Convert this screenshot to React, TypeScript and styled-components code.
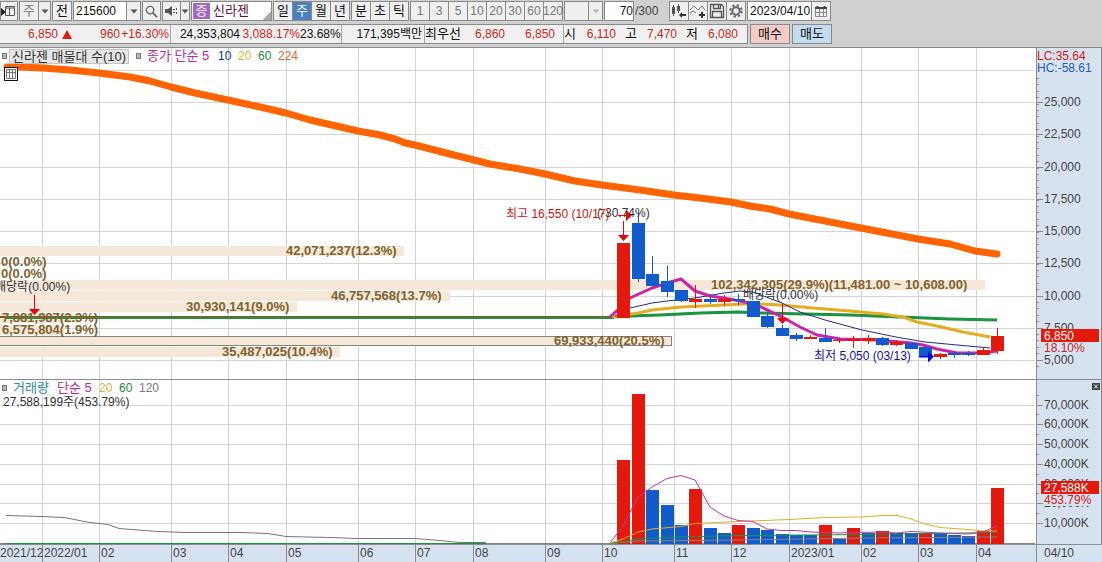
import React from 'react';
import styled, { createGlobalStyle } from 'styled-components';

const FONT = '"Liberation Sans", "Noto Sans CJK KR", sans-serif';
const RED = '#e5190b';
const BLUE = '#125bcc';
const MAGENTA = '#cc22a8';
const YELLOW = '#e6ac20';
const GREEN = '#1a9440';
const NAVY = '#1d2f8c';
const GRID = '#d4d4d4';
const AXIS_BG = '#d7e2f0';
const AXIS_LINE = '#8c8c90';
const PROFILE = '#f5e8d8';
const PROFILE_TEXT = '#80622f';

const GlobalStyle = createGlobalStyle`
  * { box-sizing: border-box; }
  body { margin: 0; background: #d0d0d0; font-family: ${FONT}; font-size: 12px; color: #111; overflow-x: hidden; }
  button, input, select { font: inherit; color: inherit; margin: 0; border-radius: 0; }
`;

const Header = styled.header`
  display: flex;
  flex-direction: column;
  gap: 3px;
  padding: 1px 0 3px;
  background: #d0d0d0;
`;

const Bar = styled.div<{ $gap?: number }>`
  display: flex;
  gap: ${p => p.$gap ?? 1}px;
  height: 20px;
`;

const Group = styled.div`
  display: flex;
  flex: none;
  border: 1px solid #8a8a8a;
  background: #8a8a8a;
  gap: 1px;
`;

const Key = styled.button<{ $w?: number; $active?: boolean; $muted?: boolean }>`
  display: flex;
  align-items: center;
  justify-content: center;
  width: ${p => p.$w ?? 18}px;
  height: 18px;
  padding: 0;
  border: 0;
  font-size: ${p => (p.$muted ? 12 : 13)}px;
  line-height: 18px;
  white-space: nowrap;
  background: ${p => (p.$active ? '#4a80c0' : '#efefef')};
  color: ${p => (p.$active ? '#fff' : p.$muted ? '#777' : '#111')};
`;

const Field = styled.input<{ $w: number; $align?: string }>`
  width: ${p => p.$w}px;
  height: 18px;
  padding: 0 0 0 2px;
  border: 0;
  background: #fff;
  text-align: ${p => p.$align ?? 'left'};
  outline: none;
`;

const Pick = styled.select<{ $w: number }>`
  width: ${p => p.$w}px;
  height: 18px;
  padding: 0 3px;
  border: 0;
  appearance: none;
  background: #efefef;
  color: #777;
  font-size: 13px;
  line-height: 18px;
`;

const Badge = styled.span`
  width: 17px;
  height: 16px;
  margin: 1px 3px 1px 1px;
  line-height: 16px;
  text-align: center;
  background: #a964c4;
  color: #fff;
`;

const StockName = styled.div`
  display: flex;
  width: 79px;
  height: 18px;
  background: linear-gradient(135deg, #fff 50%, #aaa 50%) right bottom / 8px 8px no-repeat #fff;
  color: #6a1040;
  font-size: 13px;
  line-height: 18px;
`;

const Total = styled.span`
  width: 33px;
  line-height: 20px;
  color: #444;
`;

const Quotes = styled.div`
  display: flex;
  width: 748px;
  border: 1px solid #8a8a8a;
  border-left: 0;
  background: #f0f0f0;
`;

const Cell = styled.div<{ $w: number }>`
  display: flex;
  flex: none;
  width: ${p => p.$w}px;
  height: 18px;
  line-height: 18px;
  white-space: nowrap;
  border-right: 1px solid #a8a8a8;
  &:last-child { border-right: 0; }
`;

const Value = styled.span<{ $w: number; $up?: boolean; $left?: boolean; $word?: boolean }>`
  flex: none;
  width: ${p => p.$w}px;
  font-size: ${p => (p.$word ? 13 : 12)}px;
  text-align: ${p => (p.$left ? 'left' : 'right')};
  color: ${p => (p.$up ? '#c62a1e' : '#111')};
`;

const UpMark = styled.span`
  flex: none;
  width: 0;
  height: 0;
  margin: 5px 0 0 4px;
  border: 5px solid transparent;
  border-top: 0;
  border-bottom: 9px solid #dd2010;
`;

const Order = styled.button<{ $bg: string }>`
  width: 40px;
  height: 20px;
  padding: 0;
  border: 1px solid #8a8a8a;
  background: ${p => p.$bg};
  font-size: 13px;
  line-height: 18px;
`;

const Board = styled.main`
  display: grid;
  grid-template-columns: minmax(0, 1fr) 66px;
  border-top: 1px solid #8a8a8a;
`;

const Panel = styled.section<{ $h: number }>`
  position: relative;
  height: ${p => p.$h}px;
  background: #fff;
  border-bottom: 1px solid #8c8c8c;
`;

const Scale = styled.aside<{ $h: number }>`
  position: relative;
  height: ${p => p.$h}px;
  background: ${AXIS_BG};
  border-left: 1px solid ${AXIS_LINE};
  border-right: 1px solid ${AXIS_LINE};
  border-bottom: 1px solid ${AXIS_LINE};
`;

const Drawing = styled.svg<{ $h: number }>`
  display: block;
  width: 100%;
  height: ${p => p.$h}px;
  font-family: ${FONT};
  font-size: 12px;
`;

const Legend = styled.div`
  position: absolute;
  top: 0;
  left: 2px;
  display: flex;
  align-items: center;
  height: 16px;
  line-height: 16px;
  white-space: nowrap;
`;

const LegendBox = styled.i`
  width: 5px;
  height: 6px;
  border: 1px solid #777;
  background: #b8b8b8;
`;

const LegendButton = styled.button`
  width: 120px;
  height: 15px;
  margin: 0 7px 0 2px;
  padding: 0;
  border: 1px solid #c4c4c4;
  background: #e6e6e6;
  color: #333;
  line-height: 13px;
  font-size: 13px;
`;

const LegendText = styled.span<{ $c: string; $w: number; $word?: boolean }>`
  width: ${p => p.$w}px;
  padding-left: ${p => (p.$word ? 6 : 0)}px;
  color: ${p => p.$c};
  font-size: ${p => (p.$word ? 13 : 12)}px;
`;

const Readout = styled.div`
  position: absolute;
  top: 14px;
  left: 3px;
  line-height: 16px;
  color: #333;
`;

const TableButton = styled.button`
  position: absolute;
  top: 19px;
  left: 4px;
  width: 14px;
  height: 14px;
  padding: 0;
  border: 1px solid #111;
  background: #fff;
  svg { display: block; }
`;

const CloseButton = styled.button`
  position: absolute;
  top: 3px;
  right: 1px;
  width: 8px;
  height: 7px;
  padding: 0;
  border: 0;
  background: #3c4048;
  svg { display: block; }
`;

const DateStrip = styled.footer`
  height: 17px;
  background: ${AXIS_BG};
`;

const DateCorner = styled.div`
  height: 17px;
  padding-left: 7px;
  line-height: 16px;
  background: ${AXIS_BG};
  border-left: 1px solid ${AXIS_LINE};
  color: #444;
`;

const W = 1036;
const PRICE_TOP = 48;
const PRICE_H = 331;
const VOL_TOP = 380;
const VOL_H = 164;
const pct = (x: number) => `${(x / W) * 100}%`;

const months: [number, string][] = [
  [42, '2022/01'], [99, '02'], [171, '03'], [228, '04'], [286, '05'], [358, '06'], [415, '07'], [473, '08'],
  [545, '09'], [602, '10'], [674, '11'], [731, '12'], [789, '2023/01'], [861, '02'], [918, '03'], [976, '04'],
];

const priceTicks: [number, string][] = [
  [102, '25,000'], [134, '22,500'], [167, '20,000'], [199, '17,500'], [231, '15,000'],
  [263, '12,500'], [296, '10,000'], [328, '7,500'], [360, '5,000'],
];

const volumeTicks: [number, string][] = [
  [405, '70,000K'], [424, '60,000K'], [444, '50,000K'], [464, '40,000K'],
  [484, '30,000K'], [503, '20,000K'], [523, '10,000K'],
];

/* center x, body top, body bottom, wick top, wick bottom, rising, volume top, volume rising */
type Week = [number, number, number, number, number, boolean, number, boolean];
const weeks: Week[] = [
  [623, 243, 318, 243, 318, true, 460, true],
  [638, 223, 279, 212, 282, false, 394, true],
  [652, 274, 286, 256, 286, false, 490, false],
  [667, 281, 292, 266, 297, false, 505, false],
  [681, 290, 301, 290, 302, false, 525, false],
  [695, 299, 302, 285, 308, true, 489, true],
  [710, 299, 302, 294, 304, false, 528, false],
  [724, 299, 302, 295, 306, true, 533, false],
  [738, 299, 301, 294, 305, false, 525, true],
  [753, 301, 317, 301, 317, false, 528, false],
  [767, 316, 327, 313, 328, false, 530, false],
  [782, 328, 336, 325, 336, false, 534, false],
  [796, 335, 339, 333, 341, false, 535, false],
  [810, 337, 339, 335, 339, true, 535, false],
  [825, 338, 342, 328, 342, false, 525, true],
  [839, 340, 341, 338, 343, true, 539, false],
  [853, 339, 341, 336, 348, true, 528, true],
  [868, 338, 341, 335, 344, true, 533, false],
  [882, 338, 345, 337, 346, false, 531, true],
  [896, 342, 345, 340, 346, true, 533, false],
  [911, 343, 349, 343, 349, false, 533, false],
  [925, 347, 356, 347, 356, false, 533, true],
  [940, 354, 357, 353, 359, true, 533, false],
  [954, 353, 355, 352, 358, false, 535, false],
  [968, 353, 355, 351, 356, false, 536, false],
  [983, 350, 355, 347, 355, true, 531, true],
  [997, 336, 351, 328, 354, true, 488, true],
];

const profile: [number, number, number, string][] = [
  [246, 404, 286, '42,071,237(12.3%)'],
  [280, 985, 711, '102,342,305(29.9%)(11,481.00 ~ 10,608.00)'],
  [291, 450, 331, '46,757,568(13.7%)'],
  [302, 297, 186, '30,930,141(9.0%)'],
  [313, 77, 2, '7,881,987(2.3%)'],
  [325, 64, 2, '6,575,804(1.9%)'],
  [347, 340, 222, '35,487,025(10.4%)'],
];

const Months = ({ top, h }: { top: number; h: number }) => (
  <>
    {months.map(([x]) => (
      <rect key={x} x={x} y={top} width={1} height={h} fill={GRID} />
    ))}
  </>
);

const Caret = ({ c = '#555' }: { c?: string }) => (
  <svg width="8" height="5" viewBox="0 0 8 5"><path d="M0.500 0.500h7L4 4.500z" fill={c} /></svg>
);

const PriceChart = () => (
  <Drawing $h={PRICE_H} role="img" aria-label="주가 차트">
    <svg width="100%" height={PRICE_H} viewBox={`0 ${PRICE_TOP} ${W} ${PRICE_H}`} preserveAspectRatio="none">
      <Months top={PRICE_TOP} h={PRICE_H} />
      {[70, ...priceTicks.map(t => t[0])].map(y => (
        <rect key={y} x={0} y={y} width={W - 1} height={1} fill={GRID} />
      ))}
      {profile.map(([y, w]) => (
        <rect key={y} x={0} y={y} width={w} height={10} fill={PROFILE} />
      ))}
      <rect x={-1.5} y={336.5} width={673} height={9} fill={PROFILE} stroke="#85857c" />
      <polyline points="7,67 20,67 43,68 70,70 99,73 130,77 150,81 171,87 195,93 228,100 260,107 286,113 310,120 358,131 380,135 395,139 405,143 415,145 450,154 490,164 520,169 545,174 575,181 602,185 640,190 674,195 700,198 731,202 750,206 770,209 789,214 825,221 861,228 918,239 950,244 975,251 997,254"
        fill="none" stroke="#ff6400" strokeWidth={7} strokeLinecap="round" strokeLinejoin="round" />
      <rect x={0} y={316} width={612} height={2} fill="#a04a20" />
      <rect x={6} y={317} width={608} height={2} fill={GREEN} />
      <g fill="none" strokeLinejoin="round">
        <polyline points="612,317 630,316 660,315 700,313 738,312 760,313 850,315 900,317 950,319 997,320" stroke={GREEN} strokeWidth={3} />
        <polyline points="612,317 638,313 652,310 681,307 724,305 745,304 760,304 780,305 813,308 850,311 883,314 903,317 917,322 937,326 963,332 990,337" stroke={YELLOW} strokeWidth={3} />
        <polyline points="615,316 630,308 652,303 667,301 695,298 724,293 740,291 753,292 782,303 800,312 825,320 862,330 896,337 925,342 968,346 990,348" stroke={NAVY} strokeWidth={1} />
        <polyline points="610,317 622,306 630,298 652,288 667,283 681,279 695,291 710,296 724,298 745,302 761,307 782,317 800,327 817,335 840,339 877,340 911,343 923,345 937,349 957,353 983,353 997,351" stroke={MAGENTA} strokeWidth={3} />
      </g>
      {weeks.map(([x, top, bottom, high, low, up]) => (
        <g key={x} fill={up ? RED : BLUE}>
          <rect x={x} y={high} width={1} height={low - high} />
          <rect x={x - 6} y={top} width={13} height={bottom - top} />
        </g>
      ))}
      <g fill="#f00008">
        <path d="M623 221h1v14h5l-5.500 6l-5.500 -6h5z" />
        <path d="M618 215h8v-5l6 5.500l-6 5.500v-5h-8z" />
        <path d="M34 295h1v14h5l-5.500 6l-5.500 -6h5z" />
        <path d="M782 304h1v14h5l-5.500 6l-5.500 -6h5z" />
      </g>
      <path d="M919 356h9v-5l6 5.500l-6 6v-5h-9z" fill="#0008e0" />
    </svg>
    <g transform={`translate(0 ${-PRICE_TOP})`}>
      <g fill={PROFILE_TEXT} fontWeight="bold" fontSize={13}>
        {profile.map(([y, , x, label]) => (
          <text key={label} x={pct(x)} y={y + 9}>{label}</text>
        ))}
        <text x={pct(554)} y={345}>69,933,440(20.5%)</text>
        <text x={pct(1)} y={266}>0(0.0%)</text>
        <text x={pct(1)} y={278}>0(0.0%)</text>
      </g>
      <g fill="#333">
        <text x={pct(-5)} y={291}>배당락(0.00%)</text>
        <text x={pct(743)} y={299}>배당락(0.00%)</text>
        <text x={pct(597)} y={217}>(-30.74%)</text>
      </g>
      <text x={pct(506)} y={218} fill="#cc1414">최고 16,550 (10/17)</text>
      <text x={pct(814)} y={360} fill="#1010a8">최저 5,050 (03/13)</text>
    </g>
  </Drawing>
);

const PriceScale = () => (
  <Drawing $h={PRICE_H} role="img" aria-label="가격 축">
    <g transform={`translate(0 ${-PRICE_TOP})`}>
      <g fill={AXIS_LINE}>
        {Array.from({ length: 46 }, (_, i) => (
          <rect key={i} x={0} y={Math.round(78 + i * 6.4)} width={2} height={1} />
        ))}
        {priceTicks.map(([y]) => <rect key={y} x={0} y={y} width={6} height={1} />)}
      </g>
      <g fill="#444">
        {priceTicks.map(([y, label]) => <text key={y} x={7} y={y + 4}>{label}</text>)}
      </g>
      <rect x={4} y={329} width={58} height={13} fill={RED} />
      <text x={7} y={340} fill="#fff">6,850</text>
      <text x={7} y={352} fill="#d02018">18.10%</text>
      <text x={0} y={60} fill="#d02018">LC:35.64</text>
      <text x={0} y={72} fill="#2060b8">HC:-58.61</text>
    </g>
  </Drawing>
);

const VolumeChart = () => (
  <Drawing $h={VOL_H} role="img" aria-label="거래량 차트">
    <svg width="100%" height={VOL_H} viewBox={`0 ${VOL_TOP} ${W} ${VOL_H}`} preserveAspectRatio="none">
      <Months top={VOL_TOP} h={VOL_H} />
      {volumeTicks.map(([y]) => (
        <rect key={y} x={0} y={y} width={W - 1} height={1} fill={GRID} />
      ))}
      <rect x={0} y={543} width={W - 1} height={1} fill="#858578" />
      <rect x={6} y={543} width={480} height={1} fill={GREEN} />
      {weeks.map(([x, , , , , , top, up]) => (
        <rect key={x} x={x - 6} y={top} width={13} height={544 - top} fill={up ? RED : BLUE} />
      ))}
      <g fill="none">
        <polyline points="6,515.5 42,516.5 64,517.500 90,522.500 100,523.500 108,524.500 119,528.500 158,531.500 187,532.500 241,532.500 268,533.500 286,536.500 330,537.500 358,538.500 415,538.500 440,540.500 459,542.500 486,542.500" stroke="#777" />
        <polyline points="612,543 638,541 738,540 868,538 997,537" stroke="#858585" />
        <polyline points="612,543 638,539 681,537 738,535.500 868,534.500 997,532.500" stroke={GREEN} />
        <polyline points="610,543 623,539 638,532 652,529 681,526.500 695,523.500 738,521.500 789,519.500 825,517.500 861,517 882,515.500 897,515.500 911,519 925,524 940,527.500 968,529.500 983,531 997,531" stroke={YELLOW} />
        <polyline points="610,543 623,526 638,497 652,487 667,478.500 681,475.500 695,480 710,507 724,516 738,520.500 753,521.500 767,529 782,530.500 796,530.500 810,532 839,533 853,532.500 882,532 896,533 911,531.500 940,533 968,534 983,532 997,526" stroke="#b83aa0" />
      </g>
    </svg>
  </Drawing>
);

const VolumeScale = () => (
  <Drawing $h={VOL_H} role="img" aria-label="거래량 축">
    <g transform={`translate(0 ${-VOL_TOP})`}>
      <g fill={AXIS_LINE}>
        {volumeTicks.map(([y]) => (
          <React.Fragment key={y}>
            <rect x={0} y={y} width={6} height={1} />
            <rect x={0} y={y - 10} width={2} height={1} />
          </React.Fragment>
        ))}
      </g>
      <g fill="#444">
        {volumeTicks.map(([y, label]) => <text key={y} x={7} y={y + 4}>{label}</text>)}
      </g>
      <rect x={7} y={494} width={50} height={12} fill={AXIS_BG} />
      <rect x={4} y={481} width={58} height={13} fill={RED} />
      <text x={7} y={492} fill="#fff">27,588K</text>
      <text x={7} y={504} fill="#d02018">453.79%</text>
    </g>
  </Drawing>
);

export default function App() {
  return (
    <>
      <GlobalStyle />
      <Header>
        <Bar>
          <Group>
            <Key $w={16} aria-label="창 목록">
              <svg width="16" height="18" viewBox="0 0 16 18" fill="none" stroke="#555">
                <path d="M4.500 4.500h9v9h-9zM4 6h10M8.500 6v7" /><path d="M0 6l5 4-5 4z" fill="#222" stroke="none" />
              </svg>
            </Key>
          </Group>
          <Group>
            <Pick $w={18} aria-label="주기"><option>주</option></Pick>
            <Key $w={11} aria-label="주기 선택"><Caret /></Key>
          </Group>
          <Group><Key>전</Key></Group>
          <Group>
            <Field $w={52} defaultValue="215600" aria-label="종목 코드" />
            <Key $w={13} aria-label="최근 종목"><Caret /></Key>
          </Group>
          <Group>
            <Key $w={17} aria-label="종목 검색">
              <svg width="13" height="13" viewBox="0 0 14 14" fill="none" stroke="#666">
                <circle cx="5.500" cy="5.500" r="4" strokeWidth="1.500" /><path d="M8.500 8.500l4.500 4.500" strokeWidth="2" />
              </svg>
            </Key>
          </Group>
          <Group>
            <Key $w={17} aria-label="소리">
              <svg width="14" height="12" viewBox="0 0 14 12" fill="#555">
                <path d="M0 4h3l4-3v10l-4-3h-3z" /><path d="M8 4h2v1h-2zM8 7h2v1h-2zM11 3h1v2h-1zM11 7h1v2h-1z" />
              </svg>
            </Key>
            <Key $w={8} aria-label="소리 설정"><Caret /></Key>
          </Group>
          <Group>
            <StockName><Badge>증</Badge>신라젠</StockName>
          </Group>
          <Group>
            <Key>일</Key><Key $active>주</Key><Key>월</Key><Key>년</Key>
          </Group>
          <Group>
            <Key>분</Key><Key>초</Key><Key>틱</Key>
          </Group>
          <Group>
            {[1, 3, 5, 10, 20, 30, 60, 120].map(n => <Key key={n} $muted>{n}</Key>)}
          </Group>
          <Group>
            <Key $w={23} aria-label="분 직접 입력" />
            <Key $w={13} aria-label="분 목록"><Caret c="#bbb" /></Key>
          </Group>
          <Group><Field $w={28} $align="right" defaultValue="70" aria-label="표시 봉 수" /></Group>
          <Total>/300</Total>
          <Group>
            <Key aria-label="봉 추가">
              <svg width="18" height="18" viewBox="0 0 18 18" fill="#555">
                <path d="M2 5h3v7h-3zM3 3h1v11h-1zM7 4h3v5h-3zM8 2h1v9h-1z" /><path d="M9 13l3-3v2h4v2h-4v2z" fill="#333" />
              </svg>
            </Key>
            <Key aria-label="지표 추가">
              <svg width="18" height="18" viewBox="0 0 18 18" fill="none" stroke="#777">
                <path d="M1 8l4-4 4 4 4-4 3 4M1 11l3-2 3 2" /><path d="M10 13h6M13 10v6" stroke="#333" strokeWidth="2" />
              </svg>
            </Key>
            <Key aria-label="저장">
              <svg width="16" height="16" viewBox="0 0 16 16" fill="none" stroke="#555">
                <path d="M1.500 1.500h11l2 2v11h-13zM4.500 1.500v4h7v-4M3.500 14.500v-6h9v6M9.500 2v3" strokeWidth="1.300" />
              </svg>
            </Key>
            <Key aria-label="설정">
              <svg width="14" height="14" viewBox="0 0 14 14" fill="none" stroke="#666">
                <circle cx="7" cy="7" r="3.700" strokeWidth="2" /><circle cx="7" cy="7" r="5.700" strokeWidth="2" strokeDasharray="2.240 2.240" />
              </svg>
            </Key>
          </Group>
          <Group>
            <Field $w={63} defaultValue="2023/04/10" aria-label="조회 날짜" />
            <Key aria-label="달력">
              <svg width="12" height="11" viewBox="0 0 12 11" fill="none" stroke="#888">
                <path d="M0.500 1.500h11v9h-11zM0 6.500h12M4.500 3v7M8.500 3v7" /><path d="M0 2h12M2.500 0v2M9.500 0v2" stroke="#444" strokeWidth="2" />
              </svg>
            </Key>
          </Group>
        </Bar>
        <Bar $gap={2}>
          <Quotes>
            <Cell $w={171}>
              <Value $w={58} $up>6,850</Value><UpMark />
              <Value $w={48} $up>960</Value><Value $w={49} $up>+16.30%</Value>
            </Cell>
            <Cell $w={171}>
              <Value $w={69}>24,353,804</Value><Value $w={60} $up>3,088.17%</Value><Value $w={40}>23.68%</Value>
            </Cell>
            <Cell $w={83}><Value $w={80}>171,395백만</Value></Cell>
            <Cell $w={139}>
              <Value $w={39} $left $word>최우선</Value><Value $w={41} $up>6,860</Value><Value $w={50} $up>6,850</Value>
            </Cell>
            <Cell $w={182}>
              <Value $w={12} $left $word>시</Value><Value $w={40} $up>6,110</Value>
              <Value $w={21} $word>고</Value><Value $w={40} $up>7,470</Value>
              <Value $w={21} $word>저</Value><Value $w={40} $up>6,080</Value>
            </Cell>
          </Quotes>
          <Order $bg="#f5cbc7">매수</Order>
          <Order $bg="#c4dcf2">매도</Order>
        </Bar>
      </Header>
      <Board>
        <Panel $h={332}>
          <PriceChart />
          <Legend>
            <LegendBox />
            <LegendButton>신라젠 매물대 수(10)</LegendButton>
            <LegendBox />
            <LegendText $c="#b32aa0" $w={77} $word>종가 단순 5</LegendText>
            <LegendText $c="#102c8c" $w={20}>10</LegendText>
            <LegendText $c="#dcae3a" $w={20}>20</LegendText>
            <LegendText $c="#1c8a40" $w={20}>60</LegendText>
            <LegendText $c="#dc6a28" $w={20}>224</LegendText>
          </Legend>
          <TableButton aria-label="데이터 표">
            <svg width="12" height="12" viewBox="0 0 12 12" fill="none" stroke="#777">
              <path d="M1.500 1.500h9v9h-9zM1 4.500h10M4.500 1v10M7.500 1v10" />
            </svg>
          </TableButton>
        </Panel>
        <Scale $h={332}><PriceScale /></Scale>
        <Panel $h={165}>
          <VolumeChart />
          <Legend>
            <LegendBox />
            <LegendText $c="#2a8c94" $w={44} $word>거래량</LegendText>
            <LegendText $c="#b32aa0" $w={48} $word>단순 5</LegendText>
            <LegendText $c="#dcae3a" $w={20}>20</LegendText>
            <LegendText $c="#1c8a40" $w={20}>60</LegendText>
            <LegendText $c="#777" $w={20}>120</LegendText>
          </Legend>
          <Readout>27,588,199주(453.79%)</Readout>
        </Panel>
        <Scale $h={165}>
          <VolumeScale />
          <CloseButton aria-label="거래량 닫기">
            <svg width="8" height="7" viewBox="0 0 8 7" stroke="#fff"><path d="M2 1.500l4 4M6 1.500l-4 4" /></svg>
          </CloseButton>
        </Scale>
        <DateStrip>
          <Drawing $h={17} role="img" aria-label="날짜 축">
            <svg width="100%" height={17} viewBox={`0 0 ${W} 17`} preserveAspectRatio="none">
              {months.map(([x]) => <rect key={x} x={x} y={0} width={1} height={17} fill={AXIS_LINE} />)}
            </svg>
            <g fill="#444">
              <text x={0} y={12}>2021/12</text>
              {months.map(([x, label]) => <text key={x} x={pct(x + 2)} y={12}>{label}</text>)}
            </g>
          </Drawing>
        </DateStrip>
        <DateCorner>04/10</DateCorner>
      </Board>
    </>
  );
}
